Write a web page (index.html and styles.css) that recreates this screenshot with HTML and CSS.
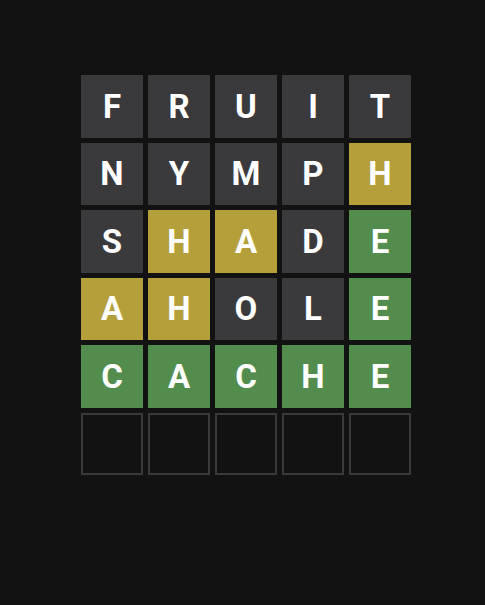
FILE: index.html
```html
<!DOCTYPE html>
<html>
<head>
<meta charset="utf-8">
<link rel="stylesheet" href="styles.css">
</head>
<body>
<div class="board">
  <div class="row"><div class="tile absent">F</div><div class="tile absent">R</div><div class="tile absent">U</div><div class="tile absent">I</div><div class="tile absent">T</div></div>
  <div class="row"><div class="tile absent">N</div><div class="tile absent">Y</div><div class="tile absent">M</div><div class="tile absent">P</div><div class="tile present">H</div></div>
  <div class="row"><div class="tile absent">S</div><div class="tile present">H</div><div class="tile present">A</div><div class="tile absent">D</div><div class="tile correct">E</div></div>
  <div class="row"><div class="tile present">A</div><div class="tile present">H</div><div class="tile absent">O</div><div class="tile absent">L</div><div class="tile correct">E</div></div>
  <div class="row"><div class="tile correct">C</div><div class="tile correct">A</div><div class="tile correct">C</div><div class="tile correct">H</div><div class="tile correct">E</div></div>
  <div class="row"><div class="tile empty"></div><div class="tile empty"></div><div class="tile empty"></div><div class="tile empty"></div><div class="tile empty"></div></div>
</div>
</body>
</html>
```
FILE: styles.css
```css
html, body {
  margin: 0;
  padding: 0;
  background: #121213;
  height: 100%;
}
body {
  font-family: Roboto, "Liberation Sans", sans-serif;
}
.board {
  display: grid;
  grid-template-rows: repeat(6, 62.5px);
  row-gap: 5px;
  width: 330px;
  padding: 75px 0 0 81px;
}
.row {
  display: grid;
  grid-template-columns: repeat(5, 62px);
  column-gap: 5px;
}
.tile {
  display: flex;
  align-items: center;
  justify-content: center;
  font-size: 33px;
  font-weight: 700;
  color: #ffffff;
  box-sizing: border-box;
  line-height: 1;
}
.absent { background: #3a3a3c; }
.present { background: #b59f3b; }
.correct { background: #538d4e; }
.empty { border: 2px solid #3a3a3c; }
```
